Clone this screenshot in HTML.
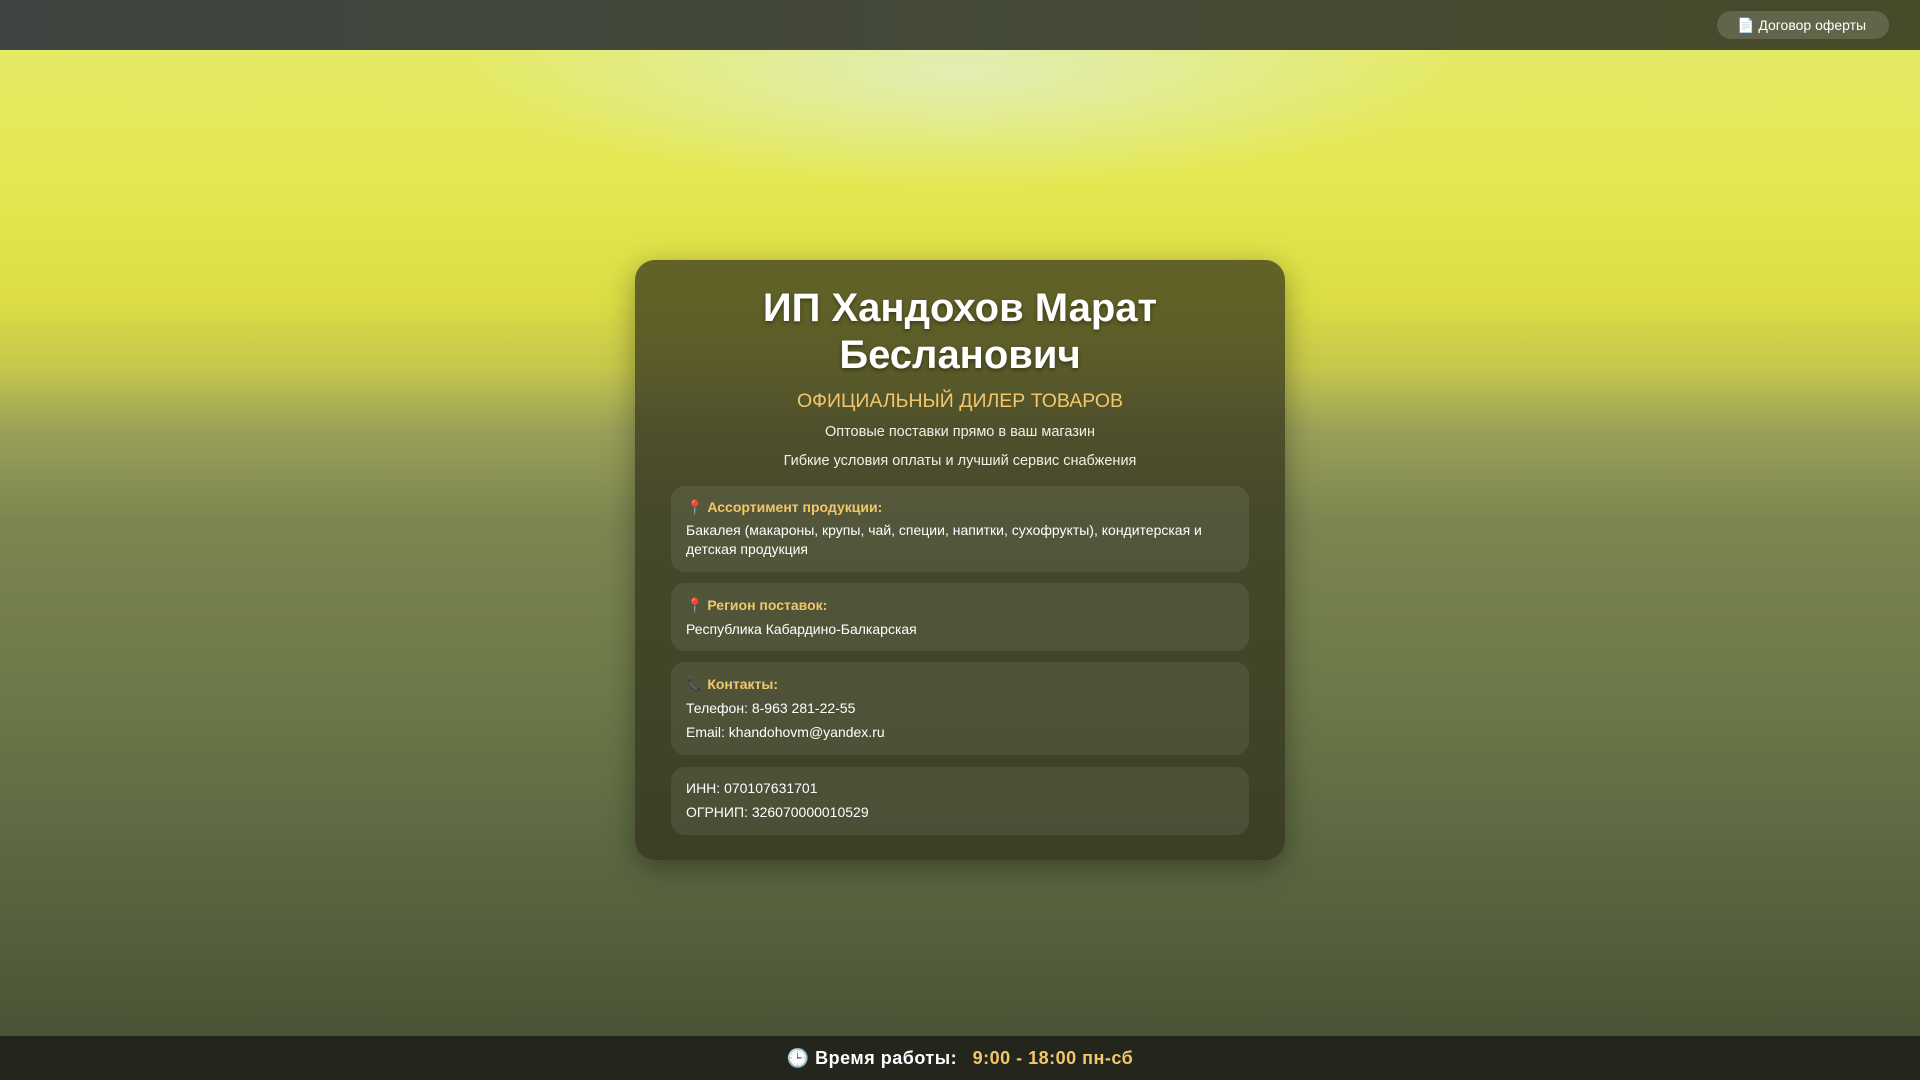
<!DOCTYPE html>
<html><head><meta charset="utf-8"><style>
*{margin:0;padding:0;box-sizing:border-box}
body{width:1920px;height:1080px;overflow:hidden;font-family:"Liberation Sans",sans-serif;position:relative;
background:
radial-gradient(ellipse 500px 120px at 960px 70px,rgba(225,240,215,.7),rgba(235,245,200,0) 100%),
linear-gradient(180deg,#e4ea70 0px,#e4e850 180px,#dcde44 300px,#c4c64c 370px,#9aa058 430px,#7c8650 520px,#6c7848 700px,#5c6842 850px,#4a5436 1036px);}
.top{position:absolute;top:0;left:0;width:1920px;height:50px;background:linear-gradient(90deg,#3e4540,#454a36 60%,#474b2a);}
.btn{position:absolute;right:31px;top:11px;height:28px;width:172px;border-radius:14px;background:rgba(255,255,255,.15);color:#fff;font-size:14px;line-height:28px;padding-left:20px}
.card{position:absolute;left:635px;top:260px;width:650px;height:600px;border-radius:20px;background:rgba(48,48,28,.72);box-shadow:0 8px 30px rgba(0,0,0,.35);text-align:center;color:#fff}
h1{font-size:40px;line-height:47px;margin-top:25px;font-weight:bold;text-shadow:0 2px 4px rgba(0,0,0,.4)}
.sub{color:#f2c76a;font-size:19.5px;margin-top:11px}
.p{font-size:14.5px;margin-top:11px;color:#f0f0e8}
.box{position:absolute;left:36px;width:578px;border-radius:14px;background:rgba(255,255,255,.08);text-align:left;padding:12px 15px;font-size:14px;line-height:24px}
.h{color:#f2c76a;font-weight:bold}
.bot{position:absolute;left:0;top:1036px;width:1920px;height:44px;background:#24261e;color:#fff;font-size:18px;font-weight:bold;text-align:center;line-height:44px;letter-spacing:.5px}
.bot b{color:#f2c76a;margin-left:10px}
</style></head><body>
<div class="top"><div class="btn">📄 Договор оферты</div></div>
<div class="card">
<h1>ИП Хандохов Марат<br>Бесланович</h1>
<div class="sub">ОФИЦИАЛЬНЫЙ ДИЛЕР ТОВАРОВ</div>
<div class="p">Оптовые поставки прямо в ваш магазин</div>
<div class="p" style="margin-top:13px">Гибкие условия оплаты и лучший сервис снабжения</div>
<div class="box" style="top:226px;height:86px;padding-top:9px"><span class="h">📍 Ассортимент продукции:</span><br><span style="line-height:19px;display:block;margin-top:2px">Бакалея (макароны, крупы, чай, специи, напитки, сухофрукты), кондитерская и детская продукция</span></div>
<div class="box" style="top:323px;height:68px;padding-top:10px"><span class="h">📍 Регион поставок:</span><br>Республика Кабардино-Балкарская</div>
<div class="box" style="top:402px;height:93px;padding-top:10px"><span class="h">📞 Контакты:</span><br>Телефон: 8-963 281-22-55<br>Email: khandohovm@yandex.ru</div>
<div class="box" style="top:507px;height:68px;padding-top:9px">ИНН: 070107631701<br>ОГРНИП: 326070000010529</div>
</div>
<div class="bot">🕒 Время работы: <b>9:00 - 18:00 пн-сб</b></div>
</body></html>
